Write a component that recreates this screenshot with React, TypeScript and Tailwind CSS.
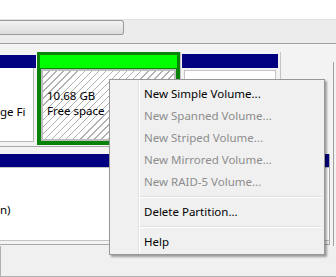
import React from 'react';

const menuItems = [
  { label: 'New Simple Volume...', enabled: true },
  { label: 'New Spanned Volume...', enabled: false },
  { label: 'New Striped Volume...', enabled: false },
  { label: 'New Mirrored Volume...', enabled: false },
  { label: 'New RAID-5 Volume...', enabled: false },
];

const MenuItem = ({ label, enabled = true }: { label: string; enabled?: boolean }) => (
  <div
    className={
      'h-[22px] flex items-center pl-[34px] ' + (enabled ? 'text-black' : 'text-[#8d8d8d]')
    }
  >
    {label}
  </div>
);

const Separator = () => (
  <div className="h-[8px] pt-[4px] ml-[30px] mr-[2px]">
    <div className="h-px bg-[#e0e0e0]" />
    <div className="h-px bg-white" />
  </div>
);

export default function App() {
  return (
    <div
      className="relative w-[336px] h-[277px] overflow-hidden bg-white text-[11.5px] leading-[15px]"
      style={{ fontFamily: '"Noto Sans", "Open Sans", sans-serif' }}
    >
      {/* list view tail + horizontal scrollbar */}
      <div className="h-[19px] bg-white" />
      <div className="h-[24px] bg-[#ececec] border-t border-[#e2e2e2]">
        <div className="w-[124px] h-[15px] rounded-r-[3px] border border-l-0 border-[#9a9a9a] bg-[linear-gradient(#f2f2f2,#dcdcdc)]" />
      </div>
      <div className="h-px bg-[#a0a0a0]" />

      {/* graphical disk view */}
      <div className="flex h-[202px] bg-[#f3f3f3]">
        <div className="w-[333px] flex flex-col">
          {/* disk 1 */}
          <div className="mt-[8px] flex items-start w-[281px] h-[95px] border-b border-[#a8a8a8]">
            <div className="w-[37px] pt-[3px]">
              <div className="w-[36px] h-[13px] bg-[#000080]" />
              <div className="w-[34px] h-[74px] bg-white border-r border-b border-[#b8b8b8] pt-[36px] overflow-hidden whitespace-nowrap">
                ge Fi
              </div>
            </div>
            <div className="w-[143px] h-[93px] border-[3px] border-[#088208] bg-[#088208] flex flex-col">
              <div className="h-[13px] bg-[#00ff00]" />
              <div className="mt-[1px] mx-px h-[72px] border-2 border-[#bdbdbd] bg-[repeating-linear-gradient(135deg,#ffffff_0px,#ffffff_4px,#b0b0b0_4px,#b0b0b0_5px)] pl-[4px] pt-[17px]">
                <div>10.68 GB</div>
                <div>Free space</div>
              </div>
            </div>
            <div className="w-[101px] h-[94px] border-x border-[#c4c4c4] pt-[2px] px-px flex flex-col">
              <div className="w-[96px] h-[14px] bg-[#000080]" />
              <div className="mt-[2px] ml-[2px] mr-[3px] flex-1 bg-white border border-[#c4c4c4] border-b-0" />
            </div>
          </div>

          {/* disk 2 */}
          <div className="mt-[7px] w-[330px] h-[91px] border-r border-b border-[#a8a8a8] flex flex-col">
            <div className="h-[13px] bg-[#000080]" />
            <div className="h-[74px] bg-white border-t border-b border-[#c4c4c4] pt-[34px]">n)</div>
          </div>
        </div>
        <div className="w-[3px] pt-[18px]">
          <div className="h-full border-l border-[#a0a0a0]" />
        </div>
      </div>

      {/* lower pane */}
      <div className="h-[31px] bg-[#f0f0f0] border-l border-b border-[#b0b0b0]" />

      {/* context menu */}
      <div className="absolute left-[109px] top-[79px] w-[216px] h-[176px] bg-[#f0f0f0] border border-[#979797] shadow-[2px_2px_2px_rgba(0,0,0,0.35)]">
        <div className="absolute left-[28px] top-0 bottom-0 w-[2px] border-l border-[#e2e3e3] bg-white" />
        <div className="relative pt-[2px] pb-[2px]">
          {menuItems.map((item) => (
            <MenuItem key={item.label} label={item.label} enabled={item.enabled} />
          ))}
          <Separator />
          <MenuItem label="Delete Partition..." />
          <Separator />
          <MenuItem label="Help" />
        </div>
      </div>
    </div>
  );
}
